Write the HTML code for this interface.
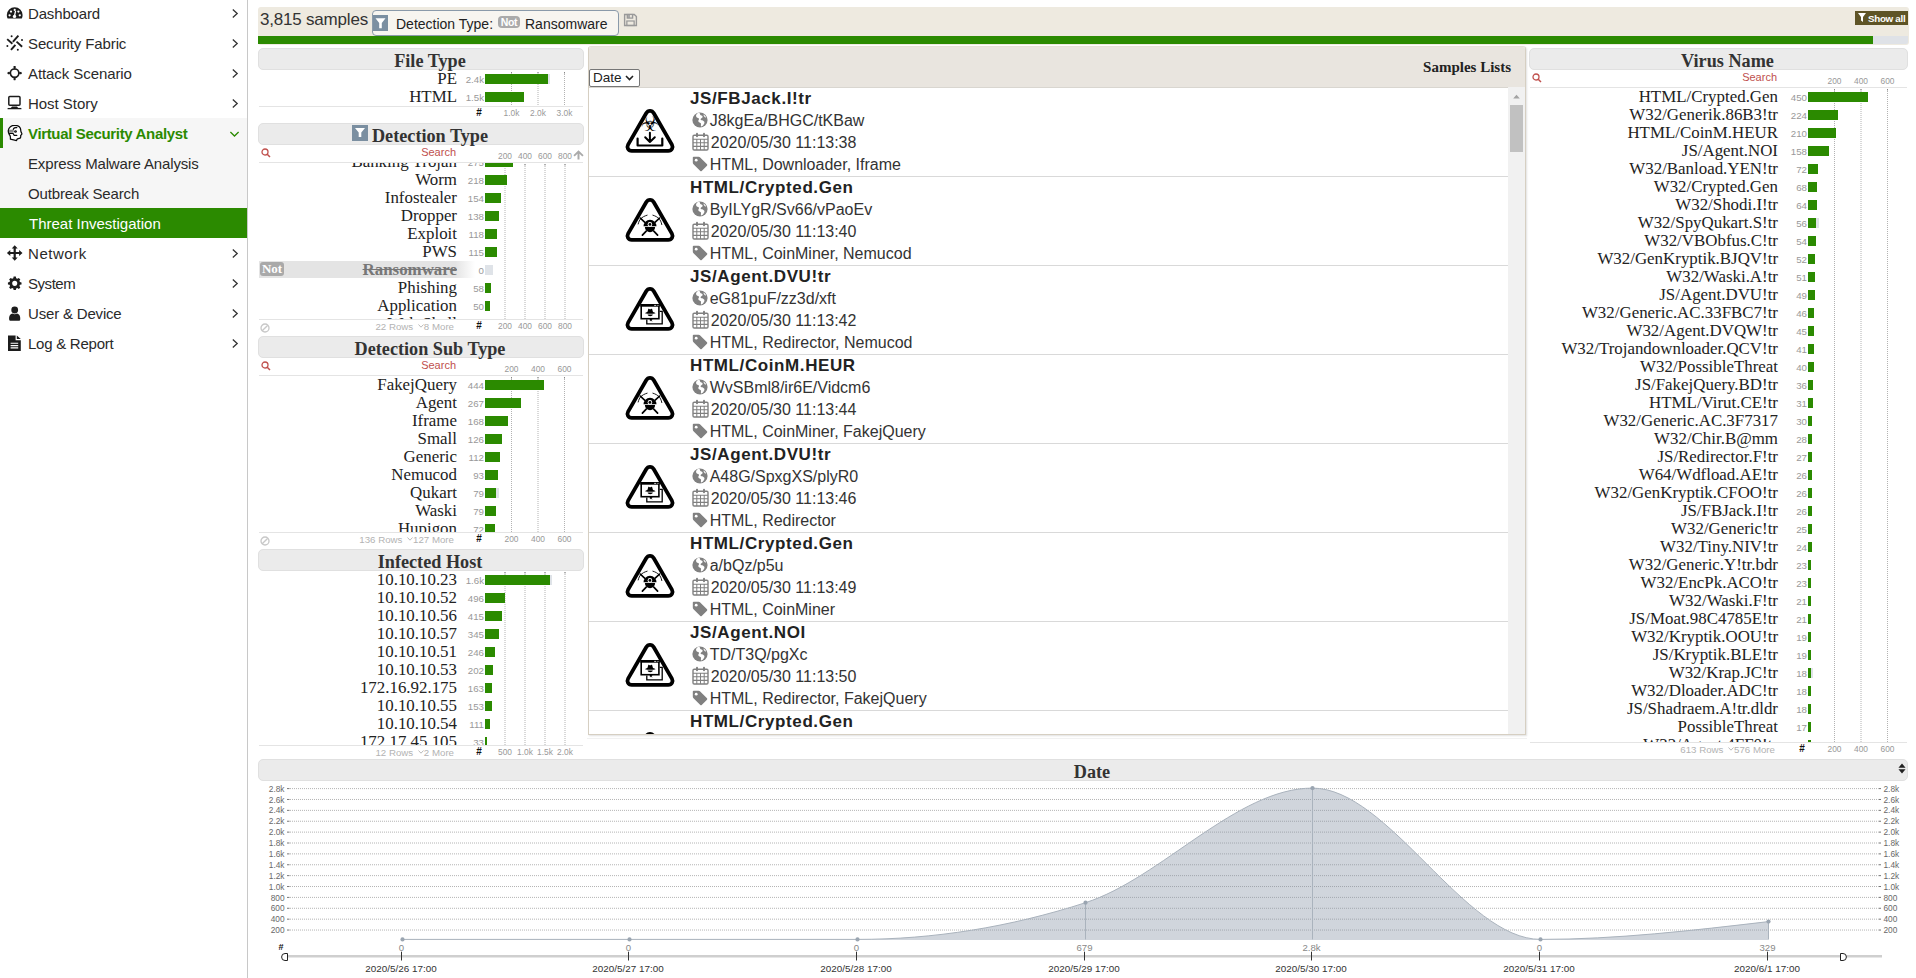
<!DOCTYPE html>
<html lang="en"><head><meta charset="utf-8"><title>Threat Investigation</title><style>
*{box-sizing:border-box}
html,body{margin:0;padding:0}
body{width:1916px;height:978px;overflow:hidden;background:#fff;position:relative;font-family:"Liberation Sans",sans-serif;color:#222}
.abs{position:absolute}
#side{position:absolute;left:0;top:0;width:248px;height:978px;border-right:1px solid #c8c8c8;background:#fff}
.mi{position:absolute;left:0;width:247px;height:30px;font-size:15px;line-height:30px;color:#2a2a2a;white-space:nowrap;letter-spacing:-0.15px}
.mi .t{position:absolute;left:28px;top:0}
.mi svg.ic{position:absolute;left:6px;top:6px;width:17px;height:17px}
.mi svg.ch{position:absolute;left:231px;top:9px;width:8px;height:11px}
.hd{position:absolute;height:22px;background:#ebebeb;border:1px solid #e0e0e0;border-radius:5px;font-family:"Liberation Serif",serif;font-weight:bold;font-size:18.2px;line-height:25px;text-align:center;color:#333;white-space:nowrap;padding-right:2px}
.lb{position:absolute;font-family:"Liberation Serif",serif;font-size:16.9px;line-height:18px;height:18px;text-align:right;white-space:nowrap;color:#222}
.ct{position:absolute;font-size:9.7px;line-height:18px;height:18px;margin-top:0.6px;text-align:right;color:#999;white-space:nowrap}
.bar{position:absolute;height:10px;background:#2b8a00}
.ax{position:absolute;font-size:8.4px;line-height:10px;color:#999;text-align:center;width:40px;white-space:nowrap}
.hl{position:absolute;height:1px;background:#e4e4e4}
.gl{position:absolute;width:0;border-left:1px dotted #bdbdbd}
.clip{position:absolute;overflow:hidden}
.sr{position:absolute;font-size:11px;line-height:12px;color:#c0504d;text-align:right;white-space:nowrap}
.ft{position:absolute;font-size:9.7px;line-height:10px;color:#b3b3b3;margin-top:2px;text-align:right;white-space:nowrap}
.hash{position:absolute;font-size:10px;font-weight:bold;line-height:10px;color:#111;width:10px;text-align:center}
.it{position:absolute;left:0;width:919px;height:89px;border-bottom:1px solid #d9d9d9}
.it .ti{position:absolute;left:101px;top:-0.5px;font-size:17px;font-weight:bold;line-height:22px;color:#222;white-space:nowrap;letter-spacing:0.6px}
.it .ln{position:absolute;left:120.7px;font-size:16px;line-height:22px;color:#333;white-space:nowrap}
.it svg.g{position:absolute;left:102.8px}
.it svg.tri{position:absolute;left:35px;top:19px;width:52px;height:47px;overflow:visible}
</style></head><body>
<div id="side">
<div class="mi" style="top:-1px;letter-spacing:-0.15px"><svg class="ic" viewBox="0 0 17 17"><path d="M8.7 2.2 A7.9 7.9 0 0 0 0.8 10.1 C0.8 11.5 1.1 12.6 1.6 13.6 L15.8 13.6 C16.3 12.6 16.6 11.5 16.6 10.1 A7.9 7.9 0 0 0 8.7 2.2 Z" fill="#1c1c1c"/><circle cx="3.6" cy="10.3" r="1.15" fill="#fff"/><circle cx="5" cy="6.6" r="1.15" fill="#fff"/><circle cx="8.7" cy="4.9" r="1.1" fill="#fff"/><circle cx="12.4" cy="6.6" r="1.15" fill="#fff"/><circle cx="13.8" cy="10.3" r="1.15" fill="#fff"/><path d="M9.6 5.8 L8.5 10.8" stroke="#fff" stroke-width="1.3"/><circle cx="8.5" cy="11.4" r="1.7" fill="#fff"/></svg><span class="t">Dashboard</span><svg class="ch" viewBox="0 0 8 11"><path d="M1.8 1.4 L6.2 5.5 L1.8 9.6" fill="none" stroke="#333" stroke-width="1.3"/></svg></div>
<div class="mi" style="top:29px;letter-spacing:-0.12px"><svg class="ic" viewBox="0 0 17 17"><g stroke="#1c1c1c" stroke-width="1.9" stroke-linecap="butt" fill="none"><path d="M1.2 4.1 L6.4 8.7"/><path d="M12.4 0.6 L6.9 6.8"/><path d="M10.5 6.6 L16.1 11.7"/><path d="M9.4 9.8 L5 14.9"/></g><g fill="#1c1c1c"><circle cx="5.6" cy="1.3" r="1"/><circle cx="1.4" cy="11" r="1"/><circle cx="16" cy="4.9" r="1"/><circle cx="11.8" cy="14.8" r="1"/></g></svg><span class="t">Security Fabric</span><svg class="ch" viewBox="0 0 8 11"><path d="M1.8 1.4 L6.2 5.5 L1.8 9.6" fill="none" stroke="#333" stroke-width="1.3"/></svg></div>
<div class="mi" style="top:59px;letter-spacing:-0.08px"><svg class="ic" viewBox="0 0 17 17"><circle cx="8.6" cy="8.1" r="4.3" fill="none" stroke="#1c1c1c" stroke-width="1.7"/><path d="M7.3 1.6 H9.9 L8.6 5 Z M7.3 14.6 H9.9 L8.6 11.2 Z M2.1 6.8 V9.4 L5.5 8.1 Z M15.1 6.8 V9.4 L11.7 8.1 Z" fill="#1c1c1c"/><path d="M8.6 1 V3 M8.6 13.2 V15.2 M1.5 8.1 H3.5 M13.7 8.1 H15.7" stroke="#1c1c1c" stroke-width="1.6"/></svg><span class="t">Attack Scenario</span><svg class="ch" viewBox="0 0 8 11"><path d="M1.8 1.4 L6.2 5.5 L1.8 9.6" fill="none" stroke="#333" stroke-width="1.3"/></svg></div>
<div class="mi" style="top:89px;letter-spacing:-0.03px"><svg class="ic" viewBox="0 0 17 17"><rect x="2.8" y="1.5" width="11.2" height="8.8" rx="1" fill="none" stroke="#1c1c1c" stroke-width="1.5"/><path d="M6 11.6 H11 L12.4 13.3 H4.6 Z" fill="#1c1c1c"/><path d="M1.6 13.6 H15.4" stroke="#1c1c1c" stroke-width="1.3"/></svg><span class="t">Host Story</span><svg class="ch" viewBox="0 0 8 11"><path d="M1.8 1.4 L6.2 5.5 L1.8 9.6" fill="none" stroke="#333" stroke-width="1.3"/></svg></div>
<div class="abs" style="left:0;top:118px;width:247px;height:90px;background:#f6f6f6"></div>
<div class="abs" style="left:0;top:118px;width:3px;height:30px;background:#2b8a00"></div>
<div class="mi" style="top:119px;color:#2b8a00"><svg class="ic" viewBox="0 0 17 17"><path d="M8.5 0.3 C10.4 0.3 12.2 0.8 13.3 1.8 C14.3 2.8 14.8 4 14.7 5.2 C14.7 6.4 15.2 7.4 15.9 8.7 C15.9 9.4 15.4 9.9 14.7 10.2 C14.8 11.2 14.7 12.2 14.4 12.9 C13.4 13.5 12.2 13.7 11.2 13.9 L10.5 15.6 C8.4 15.3 6.4 14.8 4.4 14.2 C4.5 12.9 4.4 11.7 4.1 10.7 C3.5 10 3.1 9.3 2.9 8.5 C2.4 7.6 2.2 6.6 2.3 5.6 C2.4 4 3.2 2.6 4.4 1.7 C5.6 0.8 7 0.3 8.5 0.3 Z" fill="#fff" stroke="#0a0a0a" stroke-width="1.25" stroke-linejoin="round"/><rect x="3.1" y="4.7" width="4.6" height="2.7" fill="#8a8a8a"/><path d="M10.8 2.7 C9 2.3 7.6 3 7.3 4.4 M3.2 8.4 H6.9 C7.5 8.6 7.5 9.8 8.3 10.4 H10.8" fill="none" stroke="#0a0a0a" stroke-width="1.2" stroke-linecap="round"/><circle cx="9.5" cy="6.5" r="1.35" fill="#0a0a0a"/><circle cx="9.6" cy="6.3" r="0.4" fill="#999"/></svg><span class="t" style="font-weight:bold;letter-spacing:-0.34px">Virtual Security Analyst</span><svg class="ch" viewBox="0 0 11 8" style="width:11px;height:8px;left:229px;top:11px"><path d="M1.4 2 L5.5 6 L9.6 2" fill="none" stroke="#2b8a00" stroke-width="1.3"/></svg></div>
<div class="mi" style="top:149px"><span class="t">Express Malware Analysis</span></div>
<div class="mi" style="top:179px"><span class="t">Outbreak Search</span></div>
<div class="mi" style="top:208px;background:#2b8a00;color:#fff;height:30px"><span class="t" style="top:1px;left:29px;letter-spacing:0">Threat Investigation</span></div>
<div class="mi" style="top:239px;letter-spacing:0.55px"><svg class="ic" viewBox="0 0 17 17"><path d="M8.7 0.2 L11.7 3.6 H9.8 V6.9 H13.1 V5 L16.5 8 L13.1 11 V9.1 H9.8 V12.4 H11.7 L8.7 15.8 L5.7 12.4 H7.6 V9.1 H4.3 V11 L0.9 8 L4.3 5 V6.9 H7.6 V3.6 H5.7 Z" fill="#1c1c1c"/></svg><span class="t">Network</span><svg class="ch" viewBox="0 0 8 11"><path d="M1.8 1.4 L6.2 5.5 L1.8 9.6" fill="none" stroke="#333" stroke-width="1.3"/></svg></div>
<div class="mi" style="top:269px;letter-spacing:-0.45px"><svg class="ic" viewBox="0 0 17 17"><path d="M7.2 1.2 H9.8 L10.2 3.2 L11.6 3.8 L13.3 2.7 L15.1 4.5 L14 6.2 L14.6 7.6 L16.5 8 V10.5 L14.6 10.9 L14 12.3 L15.1 14 L13.3 15.8 L11.6 14.7 L10.2 15.3 L9.8 17 H7.2 L6.8 15.3 L5.4 14.7 L3.7 15.8 L1.9 14 L3 12.3 L2.4 10.9 L0.5 10.5 V8 L2.4 7.6 L3 6.2 L1.9 4.5 L3.7 2.7 L5.4 3.8 L6.8 3.2 Z M8.5 6.1 A3 3 0 1 0 8.5 12.1 A3 3 0 1 0 8.5 6.1 Z" fill="#1c1c1c" fill-rule="evenodd" transform="translate(1.5,0.6) scale(0.85)"/></svg><span class="t">System</span><svg class="ch" viewBox="0 0 8 11"><path d="M1.8 1.4 L6.2 5.5 L1.8 9.6" fill="none" stroke="#333" stroke-width="1.3"/></svg></div>
<div class="mi" style="top:299px;letter-spacing:-0.18px"><svg class="ic" viewBox="0 0 17 17"><circle cx="8.7" cy="5" r="3.4" fill="#1c1c1c"/><path d="M3.2 14.8 C2.6 10.3 4.9 8.6 6.4 8.4 C7.8 9.4 9.6 9.4 11 8.4 C12.5 8.6 14.8 10.3 14.2 14.8 C14.1 15.4 13.7 15.7 13.2 15.7 H4.2 C3.7 15.7 3.3 15.4 3.2 14.8 Z" fill="#1c1c1c"/></svg><span class="t">User &amp; Device</span><svg class="ch" viewBox="0 0 8 11"><path d="M1.8 1.4 L6.2 5.5 L1.8 9.6" fill="none" stroke="#333" stroke-width="1.3"/></svg></div>
<div class="mi" style="top:329px;letter-spacing:-0.25px"><svg class="ic" viewBox="0 0 17 17"><path d="M2 0.4 H9.6 V5.2 H14.8 V16 H2 Z M10.8 0.4 L14.8 4 H10.8 Z" fill="#1c1c1c"/><path d="M4.6 8.3 H12.2 M4.6 10.6 H12.2 M4.6 12.9 H12.2" stroke="#fff" stroke-width="1.1"/></svg><span class="t">Log &amp; Report</span><svg class="ch" viewBox="0 0 8 11"><path d="M1.8 1.4 L6.2 5.5 L1.8 9.6" fill="none" stroke="#333" stroke-width="1.3"/></svg></div>
</div>
<div class="abs" style="left:258px;top:7px;width:1651px;height:38px;background:#eeeae0;border-radius:3px"></div>
<div class="abs" style="left:258px;top:36px;width:1650px;height:8px;background:#dfe2e7;border-radius:0 0 2px 0"></div>
<div class="abs" style="left:258px;top:36px;width:1615px;height:8px;background:#2b8a00"></div>
<div class="abs" style="left:260px;top:10px;font-size:17px;line-height:20px;color:#333;white-space:nowrap;letter-spacing:-0.2px">3,815 samples</div>
<div class="abs" style="left:372px;top:10px;width:247px;height:26px;border:1px solid #8a9aaa;border-radius:4px;background:#f7f5f0"></div>
<svg class="abs" style="left:373px;top:15px;width:15px;height:16px" viewBox="0 0 15 15" preserveAspectRatio="none"><rect width="15" height="15" fill="#7b8fa1"/><path d="M2.5 3 H12.5 L8.8 7.5 V12.5 H6.2 V7.5 Z" fill="#fff"/></svg>
<div class="abs" style="left:396px;top:14.5px;font-size:14px;line-height:18px;color:#222;white-space:nowrap">Detection Type:</div>
<div class="abs" style="left:498px;top:16px;width:22px;height:12px;border-radius:4px;background:#aaa;color:#fff;font-size:10.5px;font-weight:bold;line-height:12px;text-align:center;letter-spacing:-0.3px">Not</div>
<div class="abs" style="left:525px;top:14.5px;font-size:14px;line-height:18px;color:#222;white-space:nowrap">Ransomware</div>
<svg class="abs" style="left:622.5px;top:12.5px;width:15px;height:14px" viewBox="0 0 14 14" preserveAspectRatio="none"><path d="M1.5 1.5 H10.5 L12.5 3.5 V12.5 H1.5 Z" fill="none" stroke="#999" stroke-width="1.3"/><rect x="4" y="1.5" width="5" height="3.6" fill="#aaa" stroke="#999" stroke-width="1.2"/><rect x="6.6" y="2" width="1.6" height="2.4" fill="#eeeae0"/><rect x="3.6" y="8" width="6.8" height="4.5" fill="none" stroke="#999" stroke-width="1.2"/></svg>
<div class="abs" style="left:1855px;top:11px;width:53px;height:14px;background:#5e5426;color:#fff;font-size:9.8px;font-weight:bold;line-height:14px;white-space:nowrap;letter-spacing:-0.3px"><svg style="position:absolute;left:3px;top:1.5px;width:8px;height:9px" viewBox="0 0 8 9"><path d="M0 0 H8 L5 4 V9 L3 7.5 V4 Z" fill="#fff"/></svg><span style="position:absolute;left:13px;top:0.5px">Show all</span></div>
<div class="hd" style="left:258px;top:48px;width:326px"><svg style="display:inline-block;vertical-align:top;margin:1px 4px 0 0;width:16px;height:16px;visibility:hidden" viewBox="0 0 16 16"><rect width="16" height="16" fill="#7b8fa1"/><path d="M3 3 H13 L9.3 7.5 V12 H6.7 V7.5 Z" fill="#fff"/></svg>File Type</div>
<svg class="abs" style="left:258px;top:72px;width:326px;height:34px" viewBox="0 0 326 34"><line x1="253.50" x2="253.50" y1="0" y2="34" stroke="#b2b2b2" stroke-width="1" stroke-dasharray="1 1"/><line x1="253.50" x2="253.50" y1="0" y2="1.5" stroke="#888" stroke-width="1"/><line x1="280.00" x2="280.00" y1="0" y2="34" stroke="#b2b2b2" stroke-width="1" stroke-dasharray="1 1"/><line x1="280.00" x2="280.00" y1="0" y2="1.5" stroke="#888" stroke-width="1"/><line x1="306.50" x2="306.50" y1="0" y2="34" stroke="#b2b2b2" stroke-width="1" stroke-dasharray="1 1"/><line x1="306.50" x2="306.50" y1="0" y2="1.5" stroke="#888" stroke-width="1"/></svg>
<div class="clip" style="left:258px;top:71px;width:326px;height:35px">
<div class="lb" style="left:0;top:-1px;width:199px">PE</div>
<div class="ct" style="left:0;top:-1px;width:226px">2.4k</div>
<div class="bar" style="left:227px;top:3px;width:64.6px;background:#dfe3e8"></div>
<div class="bar" style="left:227px;top:3px;width:63.1px"></div>
<div class="lb" style="left:0;top:17px;width:199px">HTML</div>
<div class="ct" style="left:0;top:17px;width:226px">1.5k</div>
<div class="bar" style="left:227px;top:21px;width:39.1px"></div>
</div>
<div class="hl" style="left:259px;top:106px;width:324px"></div>
<div class="ax" style="left:491.5px;top:108px">1.0k</div>
<div class="ax" style="left:518.0px;top:108px">2.0k</div>
<div class="ax" style="left:544.5px;top:108px">3.0k</div>
<div class="hash" style="left:474px;top:108px">#</div>
<div class="hd" style="left:258px;top:123px;width:326px"><svg style="display:inline-block;vertical-align:top;margin:1px 4px 0 0;width:16px;height:16px;visibility:visible" viewBox="0 0 16 16"><rect width="16" height="16" fill="#7b8fa1"/><path d="M3 3 H13 L9.3 7.5 V12 H6.7 V7.5 Z" fill="#fff"/></svg>Detection Type</div>
<svg class="abs" style="left:261px;top:148px;width:10px;height:10px" viewBox="0 0 10 10"><circle cx="4" cy="4" r="3" fill="none" stroke="#c0504d" stroke-width="1.3"/><path d="M6.2 6.2 L9 9" stroke="#c0504d" stroke-width="1.5"/></svg>
<div class="sr" style="left:396px;top:146px;width:60px">Search</div>
<div class="hl" style="left:259px;top:162px;width:324px"></div>
<div class="ax" style="left:485.0px;top:151px">200</div>
<div class="ax" style="left:505.0px;top:151px">400</div>
<div class="ax" style="left:525.0px;top:151px">600</div>
<div class="ax" style="left:545.0px;top:151px">800</div>
<svg class="abs" style="left:258px;top:164px;width:326px;height:155px" viewBox="0 0 326 155"><line x1="247.00" x2="247.00" y1="0" y2="155" stroke="#b2b2b2" stroke-width="1" stroke-dasharray="1 1"/><line x1="247.00" x2="247.00" y1="0" y2="1.5" stroke="#888" stroke-width="1"/><line x1="267.00" x2="267.00" y1="0" y2="155" stroke="#b2b2b2" stroke-width="1" stroke-dasharray="1 1"/><line x1="267.00" x2="267.00" y1="0" y2="1.5" stroke="#888" stroke-width="1"/><line x1="287.00" x2="287.00" y1="0" y2="155" stroke="#b2b2b2" stroke-width="1" stroke-dasharray="1 1"/><line x1="287.00" x2="287.00" y1="0" y2="1.5" stroke="#888" stroke-width="1"/><line x1="307.00" x2="307.00" y1="0" y2="155" stroke="#b2b2b2" stroke-width="1" stroke-dasharray="1 1"/><line x1="307.00" x2="307.00" y1="0" y2="1.5" stroke="#888" stroke-width="1"/></svg>
<div class="clip" style="left:258px;top:163px;width:326px;height:156px">
<div class="lb" style="left:0;top:-10px;width:199px">Banking Trojan</div>
<div class="ct" style="left:0;top:-10px;width:226px">275</div>
<div class="bar" style="left:227px;top:-6px;width:27.9px"></div>
<div class="lb" style="left:0;top:8px;width:199px">Worm</div>
<div class="ct" style="left:0;top:8px;width:226px">218</div>
<div class="bar" style="left:227px;top:12px;width:22.2px"></div>
<div class="lb" style="left:0;top:26px;width:199px">Infostealer</div>
<div class="ct" style="left:0;top:26px;width:226px">154</div>
<div class="bar" style="left:227px;top:30px;width:15.8px"></div>
<div class="lb" style="left:0;top:44px;width:199px">Dropper</div>
<div class="ct" style="left:0;top:44px;width:226px">138</div>
<div class="bar" style="left:227px;top:48px;width:14.2px"></div>
<div class="lb" style="left:0;top:62px;width:199px">Exploit</div>
<div class="ct" style="left:0;top:62px;width:226px">118</div>
<div class="bar" style="left:227px;top:66px;width:12.2px"></div>
<div class="lb" style="left:0;top:80px;width:199px">PWS</div>
<div class="ct" style="left:0;top:80px;width:226px">115</div>
<div class="bar" style="left:227px;top:84px;width:11.8px"></div>
<div class="abs" style="left:1px;top:98px;width:216px;height:17px;background:linear-gradient(90deg,#e4e4e4 0,#e4e4e4 91%,rgba(228,228,228,0) 100%)"></div>
<div class="abs" style="left:2px;top:99px;width:24px;height:14px;border-radius:3px;background:#a9a9a9;color:#fff;font-family:'Liberation Serif',serif;font-weight:bold;font-size:13px;line-height:14px;text-align:center">Not</div>
<div class="lb" style="left:0;top:98px;width:199px;color:#777;font-weight:bold;text-decoration:line-through">Ransomware</div>
<div class="ct" style="left:0;top:98px;width:226px">0</div>
<div class="bar" style="left:227px;top:102px;width:8px;background:#dfe3e8"></div>
<div class="lb" style="left:0;top:116px;width:199px">Phishing</div>
<div class="ct" style="left:0;top:116px;width:226px">58</div>
<div class="bar" style="left:227px;top:120px;width:6.2px"></div>
<div class="lb" style="left:0;top:134px;width:199px">Application</div>
<div class="ct" style="left:0;top:134px;width:226px">50</div>
<div class="bar" style="left:227px;top:138px;width:5.3px"></div>
<div class="lb" style="left:0;top:152px;width:199px">Web Shell</div>
<div class="ct" style="left:0;top:152px;width:226px">42</div>
<div class="bar" style="left:227px;top:156px;width:4.5px"></div>
</div>
<div class="hl" style="left:259px;top:319px;width:324px"></div>
<div class="ax" style="left:485.0px;top:321px">200</div>
<div class="ax" style="left:505.0px;top:321px">400</div>
<div class="ax" style="left:525.0px;top:321px">600</div>
<div class="ax" style="left:545.0px;top:321px">800</div>
<div class="hash" style="left:474px;top:321px">#</div>
<div class="ft" style="left:254px;top:320px;width:200px">22 Rows <svg style="display:inline-block;width:6px;height:4px;margin:0 0 2px 2px;vertical-align:baseline" viewBox="0 0 6 4"><path d="M0.5 0.5 L3 3.2 L5.5 0.5" fill="none" stroke="#b3b3b3" stroke-width="0.9"/></svg>8 More</div>
<svg class="abs" style="left:572.5px;top:149.500px;width:11px;height:10px" viewBox="0 0 11 10"><path d="M5.5 0.3 L10.6 5.2 L9.3 6.4 L6.5 3.8 V9.5 H4.500 V3.8 L1.7 6.4 L0.4 5.2 Z" fill="#aaa"/></svg>
<svg class="abs" style="left:260px;top:323px;width:10px;height:10px" viewBox="0 0 9 9"><circle cx="4.5" cy="4.5" r="3.6" fill="none" stroke="#c8c8c8" stroke-width="1.2"/><path d="M2 7 L7 2" stroke="#c8c8c8" stroke-width="1.2"/></svg>
<div class="hd" style="left:258px;top:336px;width:326px"><svg style="display:inline-block;vertical-align:top;margin:1px 4px 0 0;width:16px;height:16px;visibility:hidden" viewBox="0 0 16 16"><rect width="16" height="16" fill="#7b8fa1"/><path d="M3 3 H13 L9.3 7.5 V12 H6.7 V7.5 Z" fill="#fff"/></svg>Detection Sub Type</div>
<svg class="abs" style="left:261px;top:361px;width:10px;height:10px" viewBox="0 0 10 10"><circle cx="4" cy="4" r="3" fill="none" stroke="#c0504d" stroke-width="1.3"/><path d="M6.2 6.2 L9 9" stroke="#c0504d" stroke-width="1.5"/></svg>
<div class="sr" style="left:396px;top:359px;width:60px">Search</div>
<div class="hl" style="left:259px;top:375px;width:324px"></div>
<div class="ax" style="left:491.5px;top:364px">200</div>
<div class="ax" style="left:518.0px;top:364px">400</div>
<div class="ax" style="left:544.5px;top:364px">600</div>
<svg class="abs" style="left:258px;top:377px;width:326px;height:155px" viewBox="0 0 326 155"><line x1="253.50" x2="253.50" y1="0" y2="155" stroke="#b2b2b2" stroke-width="1" stroke-dasharray="1 1"/><line x1="253.50" x2="253.50" y1="0" y2="1.5" stroke="#888" stroke-width="1"/><line x1="280.00" x2="280.00" y1="0" y2="155" stroke="#b2b2b2" stroke-width="1" stroke-dasharray="1 1"/><line x1="280.00" x2="280.00" y1="0" y2="1.5" stroke="#888" stroke-width="1"/><line x1="306.50" x2="306.50" y1="0" y2="155" stroke="#b2b2b2" stroke-width="1" stroke-dasharray="1 1"/><line x1="306.50" x2="306.50" y1="0" y2="1.5" stroke="#888" stroke-width="1"/></svg>
<div class="clip" style="left:258px;top:376px;width:326px;height:156px">
<div class="lb" style="left:0;top:0px;width:199px">FakejQuery</div>
<div class="ct" style="left:0;top:0px;width:226px">444</div>
<div class="bar" style="left:227px;top:4px;width:59.2px"></div>
<div class="lb" style="left:0;top:18px;width:199px">Agent</div>
<div class="ct" style="left:0;top:18px;width:226px">267</div>
<div class="bar" style="left:227px;top:22px;width:35.7px"></div>
<div class="lb" style="left:0;top:36px;width:199px">Iframe</div>
<div class="ct" style="left:0;top:36px;width:226px">168</div>
<div class="bar" style="left:227px;top:40px;width:22.6px"></div>
<div class="lb" style="left:0;top:54px;width:199px">Small</div>
<div class="ct" style="left:0;top:54px;width:226px">126</div>
<div class="bar" style="left:227px;top:58px;width:17.0px"></div>
<div class="lb" style="left:0;top:72px;width:199px">Generic</div>
<div class="ct" style="left:0;top:72px;width:226px">112</div>
<div class="bar" style="left:227px;top:76px;width:15.2px"></div>
<div class="lb" style="left:0;top:90px;width:199px">Nemucod</div>
<div class="ct" style="left:0;top:90px;width:226px">93</div>
<div class="bar" style="left:227px;top:94px;width:12.7px"></div>
<div class="lb" style="left:0;top:108px;width:199px">Qukart</div>
<div class="ct" style="left:0;top:108px;width:226px">79</div>
<div class="bar" style="left:227px;top:112px;width:13.8px;background:#dfe3e8"></div>
<div class="bar" style="left:227px;top:112px;width:10.8px"></div>
<div class="lb" style="left:0;top:126px;width:199px">Waski</div>
<div class="ct" style="left:0;top:126px;width:226px">79</div>
<div class="bar" style="left:227px;top:130px;width:10.8px"></div>
<div class="lb" style="left:0;top:144px;width:199px">Hupigon</div>
<div class="ct" style="left:0;top:144px;width:226px">72</div>
<div class="bar" style="left:227px;top:148px;width:9.9px"></div>
</div>
<div class="hl" style="left:259px;top:532px;width:324px"></div>
<div class="ax" style="left:491.5px;top:534px">200</div>
<div class="ax" style="left:518.0px;top:534px">400</div>
<div class="ax" style="left:544.5px;top:534px">600</div>
<div class="hash" style="left:474px;top:534px">#</div>
<div class="ft" style="left:254px;top:533px;width:200px">136 Rows <svg style="display:inline-block;width:6px;height:4px;margin:0 0 2px 2px;vertical-align:baseline" viewBox="0 0 6 4"><path d="M0.5 0.5 L3 3.2 L5.5 0.5" fill="none" stroke="#b3b3b3" stroke-width="0.9"/></svg>127 More</div>
<svg class="abs" style="left:260px;top:536px;width:10px;height:10px" viewBox="0 0 9 9"><circle cx="4.5" cy="4.5" r="3.6" fill="none" stroke="#c8c8c8" stroke-width="1.2"/><path d="M2 7 L7 2" stroke="#c8c8c8" stroke-width="1.2"/></svg>
<div class="hd" style="left:258px;top:549px;width:326px"><svg style="display:inline-block;vertical-align:top;margin:1px 4px 0 0;width:16px;height:16px;visibility:hidden" viewBox="0 0 16 16"><rect width="16" height="16" fill="#7b8fa1"/><path d="M3 3 H13 L9.3 7.5 V12 H6.7 V7.5 Z" fill="#fff"/></svg>Infected Host</div>
<svg class="abs" style="left:258px;top:572px;width:326px;height:173px" viewBox="0 0 326 173"><line x1="247.00" x2="247.00" y1="0" y2="173" stroke="#b2b2b2" stroke-width="1" stroke-dasharray="1 1"/><line x1="247.00" x2="247.00" y1="0" y2="1.5" stroke="#888" stroke-width="1"/><line x1="267.00" x2="267.00" y1="0" y2="173" stroke="#b2b2b2" stroke-width="1" stroke-dasharray="1 1"/><line x1="267.00" x2="267.00" y1="0" y2="1.5" stroke="#888" stroke-width="1"/><line x1="287.00" x2="287.00" y1="0" y2="173" stroke="#b2b2b2" stroke-width="1" stroke-dasharray="1 1"/><line x1="287.00" x2="287.00" y1="0" y2="1.5" stroke="#888" stroke-width="1"/><line x1="307.00" x2="307.00" y1="0" y2="173" stroke="#b2b2b2" stroke-width="1" stroke-dasharray="1 1"/><line x1="307.00" x2="307.00" y1="0" y2="1.5" stroke="#888" stroke-width="1"/></svg>
<div class="clip" style="left:258px;top:571px;width:326px;height:174px">
<div class="lb" style="left:0;top:0px;width:199px">10.10.10.23</div>
<div class="ct" style="left:0;top:0px;width:226px">1.6k</div>
<div class="bar" style="left:227px;top:4px;width:66.6px;background:#dfe3e8"></div>
<div class="bar" style="left:227px;top:4px;width:65.1px"></div>
<div class="lb" style="left:0;top:18px;width:199px">10.10.10.52</div>
<div class="ct" style="left:0;top:18px;width:226px">496</div>
<div class="bar" style="left:227px;top:22px;width:20.2px"></div>
<div class="lb" style="left:0;top:36px;width:199px">10.10.10.56</div>
<div class="ct" style="left:0;top:36px;width:226px">415</div>
<div class="bar" style="left:227px;top:40px;width:17.0px"></div>
<div class="lb" style="left:0;top:54px;width:199px">10.10.10.57</div>
<div class="ct" style="left:0;top:54px;width:226px">345</div>
<div class="bar" style="left:227px;top:58px;width:14.2px"></div>
<div class="lb" style="left:0;top:72px;width:199px">10.10.10.51</div>
<div class="ct" style="left:0;top:72px;width:226px">246</div>
<div class="bar" style="left:227px;top:76px;width:10.2px"></div>
<div class="lb" style="left:0;top:90px;width:199px">10.10.10.53</div>
<div class="ct" style="left:0;top:90px;width:226px">202</div>
<div class="bar" style="left:227px;top:94px;width:8.4px"></div>
<div class="lb" style="left:0;top:108px;width:199px">172.16.92.175</div>
<div class="ct" style="left:0;top:108px;width:226px">163</div>
<div class="bar" style="left:227px;top:112px;width:6.9px"></div>
<div class="lb" style="left:0;top:126px;width:199px">10.10.10.55</div>
<div class="ct" style="left:0;top:126px;width:226px">153</div>
<div class="bar" style="left:227px;top:130px;width:6.5px"></div>
<div class="lb" style="left:0;top:144px;width:199px">10.10.10.54</div>
<div class="ct" style="left:0;top:144px;width:226px">111</div>
<div class="bar" style="left:227px;top:148px;width:4.8px"></div>
<div class="lb" style="left:0;top:162px;width:199px">172.17.45.105</div>
<div class="ct" style="left:0;top:162px;width:226px">33</div>
<div class="bar" style="left:227px;top:166px;width:1.7px"></div>
</div>
<div class="hl" style="left:259px;top:745px;width:324px"></div>
<div class="ax" style="left:485.0px;top:747px">500</div>
<div class="ax" style="left:505.0px;top:747px">1.0k</div>
<div class="ax" style="left:525.0px;top:747px">1.5k</div>
<div class="ax" style="left:545.0px;top:747px">2.0k</div>
<div class="hash" style="left:474px;top:747px">#</div>
<div class="ft" style="left:254px;top:746px;width:200px">12 Rows <svg style="display:inline-block;width:6px;height:4px;margin:0 0 2px 2px;vertical-align:baseline" viewBox="0 0 6 4"><path d="M0.5 0.5 L3 3.2 L5.5 0.5" fill="none" stroke="#b3b3b3" stroke-width="0.9"/></svg>2 More</div>
<div class="hd" style="left:1529px;top:48px;width:379px"><svg style="display:inline-block;vertical-align:top;margin:1px 4px 0 0;width:16px;height:16px;visibility:hidden" viewBox="0 0 16 16"><rect width="16" height="16" fill="#7b8fa1"/><path d="M3 3 H13 L9.3 7.5 V12 H6.7 V7.5 Z" fill="#fff"/></svg>Virus Name</div>
<svg class="abs" style="left:1532px;top:73px;width:10px;height:10px" viewBox="0 0 10 10"><circle cx="4" cy="4" r="3" fill="none" stroke="#c0504d" stroke-width="1.3"/><path d="M6.2 6.2 L9 9" stroke="#c0504d" stroke-width="1.5"/></svg>
<div class="sr" style="left:1717px;top:71px;width:60px">Search</div>
<div class="hl" style="left:1530px;top:87px;width:377px"></div>
<div class="ax" style="left:1814.5px;top:76px">200</div>
<div class="ax" style="left:1841.0px;top:76px">400</div>
<div class="ax" style="left:1867.5px;top:76px">600</div>
<svg class="abs" style="left:1529px;top:89px;width:379px;height:653px" viewBox="0 0 379 653"><line x1="305.50" x2="305.50" y1="0" y2="653" stroke="#b2b2b2" stroke-width="1" stroke-dasharray="1 1"/><line x1="305.50" x2="305.50" y1="0" y2="1.5" stroke="#888" stroke-width="1"/><line x1="332.00" x2="332.00" y1="0" y2="653" stroke="#b2b2b2" stroke-width="1" stroke-dasharray="1 1"/><line x1="332.00" x2="332.00" y1="0" y2="1.5" stroke="#888" stroke-width="1"/><line x1="358.50" x2="358.50" y1="0" y2="653" stroke="#b2b2b2" stroke-width="1" stroke-dasharray="1 1"/><line x1="358.50" x2="358.50" y1="0" y2="1.5" stroke="#888" stroke-width="1"/></svg>
<div class="clip" style="left:1529px;top:88px;width:379px;height:654px">
<div class="lb" style="left:0;top:0px;width:249px">HTML/Crypted.Gen</div>
<div class="ct" style="left:0;top:0px;width:278px">450</div>
<div class="bar" style="left:279px;top:4px;width:60.0px"></div>
<div class="lb" style="left:0;top:18px;width:249px">W32/Generik.86B3!tr</div>
<div class="ct" style="left:0;top:18px;width:278px">224</div>
<div class="bar" style="left:279px;top:22px;width:30.0px"></div>
<div class="lb" style="left:0;top:36px;width:249px">HTML/CoinM.HEUR</div>
<div class="ct" style="left:0;top:36px;width:278px">210</div>
<div class="bar" style="left:279px;top:40px;width:28.2px"></div>
<div class="lb" style="left:0;top:54px;width:249px">JS/Agent.NOI</div>
<div class="ct" style="left:0;top:54px;width:278px">158</div>
<div class="bar" style="left:279px;top:58px;width:21.3px"></div>
<div class="lb" style="left:0;top:72px;width:249px">W32/Banload.YEN!tr</div>
<div class="ct" style="left:0;top:72px;width:278px">72</div>
<div class="bar" style="left:279px;top:76px;width:9.9px"></div>
<div class="lb" style="left:0;top:90px;width:249px">W32/Crypted.Gen</div>
<div class="ct" style="left:0;top:90px;width:278px">68</div>
<div class="bar" style="left:279px;top:94px;width:9.4px"></div>
<div class="lb" style="left:0;top:108px;width:249px">W32/Shodi.I!tr</div>
<div class="ct" style="left:0;top:108px;width:278px">64</div>
<div class="bar" style="left:279px;top:112px;width:8.8px"></div>
<div class="lb" style="left:0;top:126px;width:249px">W32/SpyQukart.S!tr</div>
<div class="ct" style="left:0;top:126px;width:278px">56</div>
<div class="bar" style="left:279px;top:130px;width:10.8px;background:#dfe3e8"></div>
<div class="bar" style="left:279px;top:130px;width:7.8px"></div>
<div class="lb" style="left:0;top:144px;width:249px">W32/VBObfus.C!tr</div>
<div class="ct" style="left:0;top:144px;width:278px">54</div>
<div class="bar" style="left:279px;top:148px;width:7.5px"></div>
<div class="lb" style="left:0;top:162px;width:249px">W32/GenKryptik.BJQV!tr</div>
<div class="ct" style="left:0;top:162px;width:278px">52</div>
<div class="bar" style="left:279px;top:166px;width:7.2px"></div>
<div class="lb" style="left:0;top:180px;width:249px">W32/Waski.A!tr</div>
<div class="ct" style="left:0;top:180px;width:278px">51</div>
<div class="bar" style="left:279px;top:184px;width:7.1px"></div>
<div class="lb" style="left:0;top:198px;width:249px">JS/Agent.DVU!tr</div>
<div class="ct" style="left:0;top:198px;width:278px">49</div>
<div class="bar" style="left:279px;top:202px;width:6.8px"></div>
<div class="lb" style="left:0;top:216px;width:249px">W32/Generic.AC.33FBC7!tr</div>
<div class="ct" style="left:0;top:216px;width:278px">46</div>
<div class="bar" style="left:279px;top:220px;width:6.4px"></div>
<div class="lb" style="left:0;top:234px;width:249px">W32/Agent.DVQW!tr</div>
<div class="ct" style="left:0;top:234px;width:278px">45</div>
<div class="bar" style="left:279px;top:238px;width:6.3px"></div>
<div class="lb" style="left:0;top:252px;width:249px">W32/Trojandownloader.QCV!tr</div>
<div class="ct" style="left:0;top:252px;width:278px">41</div>
<div class="bar" style="left:279px;top:256px;width:5.8px"></div>
<div class="lb" style="left:0;top:270px;width:249px">W32/PossibleThreat</div>
<div class="ct" style="left:0;top:270px;width:278px">40</div>
<div class="bar" style="left:279px;top:274px;width:5.7px"></div>
<div class="lb" style="left:0;top:288px;width:249px">JS/FakejQuery.BD!tr</div>
<div class="ct" style="left:0;top:288px;width:278px">36</div>
<div class="bar" style="left:279px;top:292px;width:5.1px"></div>
<div class="lb" style="left:0;top:306px;width:249px">HTML/Virut.CE!tr</div>
<div class="ct" style="left:0;top:306px;width:278px">31</div>
<div class="bar" style="left:279px;top:310px;width:4.5px"></div>
<div class="lb" style="left:0;top:324px;width:249px">W32/Generic.AC.3F7317</div>
<div class="ct" style="left:0;top:324px;width:278px">30</div>
<div class="bar" style="left:279px;top:328px;width:4.3px"></div>
<div class="lb" style="left:0;top:342px;width:249px">W32/Chir.B@mm</div>
<div class="ct" style="left:0;top:342px;width:278px">28</div>
<div class="bar" style="left:279px;top:346px;width:4.1px"></div>
<div class="lb" style="left:0;top:360px;width:249px">JS/Redirector.F!tr</div>
<div class="ct" style="left:0;top:360px;width:278px">27</div>
<div class="bar" style="left:279px;top:364px;width:3.9px"></div>
<div class="lb" style="left:0;top:378px;width:249px">W64/Wdfload.AE!tr</div>
<div class="ct" style="left:0;top:378px;width:278px">26</div>
<div class="bar" style="left:279px;top:382px;width:3.8px"></div>
<div class="lb" style="left:0;top:396px;width:249px">W32/GenKryptik.CFOO!tr</div>
<div class="ct" style="left:0;top:396px;width:278px">26</div>
<div class="bar" style="left:279px;top:400px;width:3.8px"></div>
<div class="lb" style="left:0;top:414px;width:249px">JS/FBJack.I!tr</div>
<div class="ct" style="left:0;top:414px;width:278px">26</div>
<div class="bar" style="left:279px;top:418px;width:3.8px"></div>
<div class="lb" style="left:0;top:432px;width:249px">W32/Generic!tr</div>
<div class="ct" style="left:0;top:432px;width:278px">25</div>
<div class="bar" style="left:279px;top:436px;width:3.7px"></div>
<div class="lb" style="left:0;top:450px;width:249px">W32/Tiny.NIV!tr</div>
<div class="ct" style="left:0;top:450px;width:278px">24</div>
<div class="bar" style="left:279px;top:454px;width:3.5px"></div>
<div class="lb" style="left:0;top:468px;width:249px">W32/Generic.Y!tr.bdr</div>
<div class="ct" style="left:0;top:468px;width:278px">23</div>
<div class="bar" style="left:279px;top:472px;width:3.4px"></div>
<div class="lb" style="left:0;top:486px;width:249px">W32/EncPk.ACO!tr</div>
<div class="ct" style="left:0;top:486px;width:278px">23</div>
<div class="bar" style="left:279px;top:490px;width:3.4px"></div>
<div class="lb" style="left:0;top:504px;width:249px">W32/Waski.F!tr</div>
<div class="ct" style="left:0;top:504px;width:278px">21</div>
<div class="bar" style="left:279px;top:508px;width:3.1px"></div>
<div class="lb" style="left:0;top:522px;width:249px">JS/Moat.98C4785E!tr</div>
<div class="ct" style="left:0;top:522px;width:278px">21</div>
<div class="bar" style="left:279px;top:526px;width:3.1px"></div>
<div class="lb" style="left:0;top:540px;width:249px">W32/Kryptik.OOU!tr</div>
<div class="ct" style="left:0;top:540px;width:278px">19</div>
<div class="bar" style="left:279px;top:544px;width:2.9px"></div>
<div class="lb" style="left:0;top:558px;width:249px">JS/Kryptik.BLE!tr</div>
<div class="ct" style="left:0;top:558px;width:278px">19</div>
<div class="bar" style="left:279px;top:562px;width:2.9px"></div>
<div class="lb" style="left:0;top:576px;width:249px">W32/Krap.JC!tr</div>
<div class="ct" style="left:0;top:576px;width:278px">18</div>
<div class="bar" style="left:279px;top:580px;width:4.7px;background:#dfe3e8"></div>
<div class="bar" style="left:279px;top:580px;width:2.7px"></div>
<div class="lb" style="left:0;top:594px;width:249px">W32/Dloader.ADC!tr</div>
<div class="ct" style="left:0;top:594px;width:278px">18</div>
<div class="bar" style="left:279px;top:598px;width:2.7px"></div>
<div class="lb" style="left:0;top:612px;width:249px">JS/Shadraem.A!tr.dldr</div>
<div class="ct" style="left:0;top:612px;width:278px">18</div>
<div class="bar" style="left:279px;top:616px;width:2.7px"></div>
<div class="lb" style="left:0;top:630px;width:249px">PossibleThreat</div>
<div class="ct" style="left:0;top:630px;width:278px">17</div>
<div class="bar" style="left:279px;top:634px;width:2.6px"></div>
<div class="lb" style="left:0;top:648px;width:249px">W32/Agent.4FF0!tr</div>
<div class="ct" style="left:0;top:648px;width:278px">17</div>
<div class="bar" style="left:279px;top:652px;width:2.6px"></div>
</div>
<div class="hl" style="left:1530px;top:742px;width:377px"></div>
<div class="ax" style="left:1814.5px;top:744px">200</div>
<div class="ax" style="left:1841.0px;top:744px">400</div>
<div class="ax" style="left:1867.5px;top:744px">600</div>
<div class="hash" style="left:1797px;top:744px">#</div>
<div class="ft" style="left:1575px;top:743px;width:200px">613 Rows <svg style="display:inline-block;width:6px;height:4px;margin:0 0 2px 2px;vertical-align:baseline" viewBox="0 0 6 4"><path d="M0.5 0.5 L3 3.2 L5.5 0.5" fill="none" stroke="#b3b3b3" stroke-width="0.9"/></svg>576 More</div>
<div class="abs" style="left:588px;top:46px;width:938px;height:689px;border:1px solid #d6cfc2;border-top-color:#e6e0d6;border-radius:3px 3px 0 0;background:#fff;box-shadow:1px 1px 2px rgba(0,0,0,.12)"></div>
<div class="abs" style="left:589px;top:47px;width:936px;height:41px;background:#e9e5df;border-radius:2px 2px 0 0;border-bottom:1px solid #d9d6d0"></div>
<div class="abs" style="left:1311px;top:58px;width:200px;text-align:right;font-family:'Liberation Serif',serif;font-weight:bold;font-size:15px;line-height:18px;color:#222">Samples Lists</div>
<div class="abs" style="left:589px;top:69px;width:51px;height:18px;border:1px solid #767676;border-radius:2px;background:#fff;font-size:13.5px;line-height:16px;color:#222"><span style="position:absolute;left:3px;top:0">Date</span><svg style="position:absolute;left:35px;top:5px;width:9px;height:6px" viewBox="0 0 9 6"><path d="M1 1 L4.5 4.5 L8 1" fill="none" stroke="#222" stroke-width="1.6"/></svg></div>
<div class="clip" style="left:589px;top:88px;width:919px;height:646px">
<div class="it" style="top:0px">
<svg class="tri" viewBox="0 0 52 47"><path d="M26 3.9 C27.7 3.9 29 4.9 29.8 6.3 L47.9 37.6 C49.5 40.6 47.8 43.9 44.3 43.9 L7.7 43.9 C4.2 43.9 2.5 40.6 4.1 37.6 L22.2 6.3 C23 4.9 24.3 3.9 26 3.9 Z" fill="none" stroke="#000" stroke-width="3.8" stroke-linejoin="round"/><text x="26" y="24.2" font-family="DejaVu Sans, sans-serif" font-size="20.5" text-anchor="middle" fill="#000">&#9763;</text><g stroke="#000" fill="none" stroke-linecap="round" stroke-linejoin="round"><path d="M25.9 25.8 V35 M21.2 30.2 L25.9 35 L30.8 30.2" stroke-width="2"/><path d="M13.6 31.5 V38.5 H38.3 V31.5" stroke-width="2.2"/></g></svg>
<div class="ti">JS/FBJack.I!tr</div>
<svg class="g" style="top:24px;width:16px;height:16px" viewBox="0 0 16 16"><circle cx="8" cy="8" r="7.6" fill="#808080"/><path d="M5.5 1.2 C4 2.5 3.6 4 4.6 5.2 C5.6 6 6.6 5.8 7 6.8 C7.2 7.8 6 8.2 6.4 9.4 C7 10.6 8.4 10.4 9 11.6 C9.2 12.6 8.6 13.6 9.2 14.6 C11 13.8 12 12.4 12.4 11 C12.8 9.8 11.6 9.2 10.8 8.6 C10 8 9 8.2 8.6 7.4 C8.4 6.4 9.6 6.2 10.4 5.4 C11 4.6 10.4 3.6 9.4 3.4 C8.4 3.2 7.8 2.4 8 1.4 C7 0.9 6.2 0.9 5.5 1.2 Z" fill="#fff"/><path d="M11.5 2.4 C12.6 3 13.6 4.2 14.2 5.4 C13.4 5.6 12.6 5.2 12.2 4.4 C11.8 3.6 11.4 3 11.5 2.4 Z" fill="#fff"/></svg>
<div class="ln" style="top:21.8px">J8kgEa/BHGC/tKBaw</div>
<svg class="g" style="top:44px;width:17px;height:19px" preserveAspectRatio="none" viewBox="0 0 17 18"><rect x="1" y="3" width="15" height="14" rx="1.2" fill="#fff" stroke="#808080" stroke-width="1.4"/><path d="M1 6.8 H16 M1 10.2 H16 M1 13.6 H16 M4.8 6.8 V17 M8.5 6.8 V17 M12.2 6.8 V17" stroke="#808080" stroke-width="1"/><rect x="4" y="0.6" width="2" height="4.4" rx="1" fill="#808080"/><rect x="11" y="0.6" width="2" height="4.4" rx="1" fill="#808080"/></svg>
<div class="ln" style="top:43.7px;left:121.8px">2020/05/30 11:13:38</div>
<svg class="g" style="top:68px;width:16px;height:16px" viewBox="0 0 16 16"><path d="M0.8 1.6 C0.8 1.1 1.1 0.8 1.6 0.8 H6.6 C7.2 0.8 7.8 1.1 8.2 1.5 L15 8.3 C15.4 8.7 15.4 9.3 15 9.7 L9.7 15 C9.3 15.4 8.7 15.4 8.3 15 L1.5 8.2 C1.1 7.8 0.8 7.2 0.8 6.6 Z" fill="#808080"/><circle cx="4.2" cy="4.2" r="1.4" fill="#fff"/></svg>
<div class="ln" style="top:65.8px">HTML, Downloader, Iframe</div>
</div>
<div class="it" style="top:89px">
<svg class="tri" viewBox="0 0 52 47"><path d="M26 3.9 C27.7 3.9 29 4.9 29.8 6.3 L47.9 37.6 C49.5 40.6 47.8 43.9 44.3 43.9 L7.7 43.9 C4.2 43.9 2.5 40.6 4.1 37.6 L22.2 6.3 C23 4.9 24.3 3.9 26 3.9 Z" fill="none" stroke="#000" stroke-width="3.8" stroke-linejoin="round"/><path d="M19.5 30.3 A6.5 6.5 0 0 1 32.5 30.3 Z" fill="#000"/><circle cx="25.9" cy="28.4" r="2.3" fill="#fff"/><circle cx="25.9" cy="28.4" r="1.4" fill="#000"/><path d="M20.9 31.1 H31.1 A5.1 5.1 0 0 1 20.9 31.1 Z" fill="#000"/><g stroke="#000" fill="none" stroke-linecap="round"><path d="M22.2 35.2 L18.4 39.2 M29.8 35.2 L33.6 39.2" stroke-width="1.7"/><path d="M20.6 26.1 L16.3 22.1 M31.2 26.1 L35.5 22.1" stroke-width="1.6"/><path d="M14.2 28 C14.8 25.5 15.6 24 16.7 22.8 C18.3 21.2 20.3 20 23.1 19.2 M37.8 28.6 C37.2 25.8 36.3 24 35.1 22.8 C33.6 21.2 31.6 20 28.9 19.2" stroke-width="0.9"/></g></svg>
<div class="ti">HTML/Crypted.Gen</div>
<svg class="g" style="top:24px;width:16px;height:16px" viewBox="0 0 16 16"><circle cx="8" cy="8" r="7.6" fill="#808080"/><path d="M5.5 1.2 C4 2.5 3.6 4 4.6 5.2 C5.6 6 6.6 5.8 7 6.8 C7.2 7.8 6 8.2 6.4 9.4 C7 10.6 8.4 10.4 9 11.6 C9.2 12.6 8.6 13.6 9.2 14.6 C11 13.8 12 12.4 12.4 11 C12.8 9.8 11.6 9.2 10.8 8.6 C10 8 9 8.2 8.6 7.4 C8.4 6.4 9.6 6.2 10.4 5.4 C11 4.6 10.4 3.6 9.4 3.4 C8.4 3.2 7.8 2.4 8 1.4 C7 0.9 6.2 0.9 5.5 1.2 Z" fill="#fff"/><path d="M11.5 2.4 C12.6 3 13.6 4.2 14.2 5.4 C13.4 5.6 12.6 5.2 12.2 4.4 C11.8 3.6 11.4 3 11.5 2.4 Z" fill="#fff"/></svg>
<div class="ln" style="top:21.8px">ByILYgR/Sv66/vPaoEv</div>
<svg class="g" style="top:44px;width:17px;height:19px" preserveAspectRatio="none" viewBox="0 0 17 18"><rect x="1" y="3" width="15" height="14" rx="1.2" fill="#fff" stroke="#808080" stroke-width="1.4"/><path d="M1 6.8 H16 M1 10.2 H16 M1 13.6 H16 M4.8 6.8 V17 M8.5 6.8 V17 M12.2 6.8 V17" stroke="#808080" stroke-width="1"/><rect x="4" y="0.6" width="2" height="4.4" rx="1" fill="#808080"/><rect x="11" y="0.6" width="2" height="4.4" rx="1" fill="#808080"/></svg>
<div class="ln" style="top:43.7px;left:121.8px">2020/05/30 11:13:40</div>
<svg class="g" style="top:68px;width:16px;height:16px" viewBox="0 0 16 16"><path d="M0.8 1.6 C0.8 1.1 1.1 0.8 1.6 0.8 H6.6 C7.2 0.8 7.8 1.1 8.2 1.5 L15 8.3 C15.4 8.7 15.4 9.3 15 9.7 L9.7 15 C9.3 15.4 8.7 15.4 8.3 15 L1.5 8.2 C1.1 7.8 0.8 7.2 0.8 6.6 Z" fill="#808080"/><circle cx="4.2" cy="4.2" r="1.4" fill="#fff"/></svg>
<div class="ln" style="top:65.8px">HTML, CoinMiner, Nemucod</div>
</div>
<div class="it" style="top:178px">
<svg class="tri" viewBox="0 0 52 47"><path d="M26 3.9 C27.7 3.9 29 4.9 29.8 6.3 L47.9 37.6 C49.5 40.6 47.8 43.9 44.3 43.9 L7.7 43.9 C4.2 43.9 2.5 40.6 4.1 37.6 L22.2 6.3 C23 4.9 24.3 3.9 26 3.9 Z" fill="none" stroke="#000" stroke-width="3.8" stroke-linejoin="round"/><g stroke="#000" fill="none"><path d="M35.7 26.3 H38.2 V38.8 H22.8 V34.5" stroke-width="1.3"/><rect x="17.2" y="19.8" width="17.7" height="13.9" stroke-width="1.6" fill="#fff"/></g><rect x="16.4" y="19" width="19.3" height="2.7" fill="#000"/><path d="M30.2 20.4 H32 M32.8 20.4 H33.6 M34.3 20.4 H34.8" stroke="#fff" stroke-width="0.8"/><path d="M21 28.2 C22.5 27.4 23.2 27.2 23.6 26.6 L24.2 24.2 C24.4 23.7 24.8 23.7 25.2 24 C25.8 24.4 26.6 24.4 27.2 24 C27.6 23.7 28 23.7 28.2 24.2 L28.8 26.6 C29.2 27.2 29.9 27.4 31.6 28.2 C29 29 23.6 29 21 28.2 Z" fill="#000"/><path d="M23.6 29.6 H28.8 C28.6 30.8 27.6 31.2 26.2 31.2 C24.8 31.2 23.8 30.8 23.6 29.6 Z" fill="#000"/><path d="M25.6 33.2 L28.8 34.6 L27.4 35 L28.6 36.6 L27.8 36.2 L26.6 35.4 L26 36.4 Z" fill="#000"/></svg>
<div class="ti">JS/Agent.DVU!tr</div>
<svg class="g" style="top:24px;width:16px;height:16px" viewBox="0 0 16 16"><circle cx="8" cy="8" r="7.6" fill="#808080"/><path d="M5.5 1.2 C4 2.5 3.6 4 4.6 5.2 C5.6 6 6.6 5.8 7 6.8 C7.2 7.8 6 8.2 6.4 9.4 C7 10.6 8.4 10.4 9 11.6 C9.2 12.6 8.6 13.6 9.2 14.6 C11 13.8 12 12.4 12.4 11 C12.8 9.8 11.6 9.2 10.8 8.6 C10 8 9 8.2 8.6 7.4 C8.4 6.4 9.6 6.2 10.4 5.4 C11 4.6 10.4 3.6 9.4 3.4 C8.4 3.2 7.8 2.4 8 1.4 C7 0.9 6.2 0.9 5.5 1.2 Z" fill="#fff"/><path d="M11.5 2.4 C12.6 3 13.6 4.2 14.2 5.4 C13.4 5.6 12.6 5.2 12.2 4.4 C11.8 3.6 11.4 3 11.5 2.4 Z" fill="#fff"/></svg>
<div class="ln" style="top:21.8px">eG81puF/zz3d/xft</div>
<svg class="g" style="top:44px;width:17px;height:19px" preserveAspectRatio="none" viewBox="0 0 17 18"><rect x="1" y="3" width="15" height="14" rx="1.2" fill="#fff" stroke="#808080" stroke-width="1.4"/><path d="M1 6.8 H16 M1 10.2 H16 M1 13.6 H16 M4.8 6.8 V17 M8.5 6.8 V17 M12.2 6.8 V17" stroke="#808080" stroke-width="1"/><rect x="4" y="0.6" width="2" height="4.4" rx="1" fill="#808080"/><rect x="11" y="0.6" width="2" height="4.4" rx="1" fill="#808080"/></svg>
<div class="ln" style="top:43.7px;left:121.8px">2020/05/30 11:13:42</div>
<svg class="g" style="top:68px;width:16px;height:16px" viewBox="0 0 16 16"><path d="M0.8 1.6 C0.8 1.1 1.1 0.8 1.6 0.8 H6.6 C7.2 0.8 7.8 1.1 8.2 1.5 L15 8.3 C15.4 8.7 15.4 9.3 15 9.7 L9.7 15 C9.3 15.4 8.7 15.4 8.3 15 L1.5 8.2 C1.1 7.8 0.8 7.2 0.8 6.6 Z" fill="#808080"/><circle cx="4.2" cy="4.2" r="1.4" fill="#fff"/></svg>
<div class="ln" style="top:65.8px">HTML, Redirector, Nemucod</div>
</div>
<div class="it" style="top:267px">
<svg class="tri" viewBox="0 0 52 47"><path d="M26 3.9 C27.7 3.9 29 4.9 29.8 6.3 L47.9 37.6 C49.5 40.6 47.8 43.9 44.3 43.9 L7.7 43.9 C4.2 43.9 2.5 40.6 4.1 37.6 L22.2 6.3 C23 4.9 24.3 3.9 26 3.9 Z" fill="none" stroke="#000" stroke-width="3.8" stroke-linejoin="round"/><path d="M19.5 30.3 A6.5 6.5 0 0 1 32.5 30.3 Z" fill="#000"/><circle cx="25.9" cy="28.4" r="2.3" fill="#fff"/><circle cx="25.9" cy="28.4" r="1.4" fill="#000"/><path d="M20.9 31.1 H31.1 A5.1 5.1 0 0 1 20.9 31.1 Z" fill="#000"/><g stroke="#000" fill="none" stroke-linecap="round"><path d="M22.2 35.2 L18.4 39.2 M29.8 35.2 L33.6 39.2" stroke-width="1.7"/><path d="M20.6 26.1 L16.3 22.1 M31.2 26.1 L35.5 22.1" stroke-width="1.6"/><path d="M14.2 28 C14.8 25.5 15.6 24 16.7 22.8 C18.3 21.2 20.3 20 23.1 19.2 M37.8 28.6 C37.2 25.8 36.3 24 35.1 22.8 C33.6 21.2 31.6 20 28.9 19.2" stroke-width="0.9"/></g></svg>
<div class="ti">HTML/CoinM.HEUR</div>
<svg class="g" style="top:24px;width:16px;height:16px" viewBox="0 0 16 16"><circle cx="8" cy="8" r="7.6" fill="#808080"/><path d="M5.5 1.2 C4 2.5 3.6 4 4.6 5.2 C5.6 6 6.6 5.8 7 6.8 C7.2 7.8 6 8.2 6.4 9.4 C7 10.6 8.4 10.4 9 11.6 C9.2 12.6 8.6 13.6 9.2 14.6 C11 13.8 12 12.4 12.4 11 C12.8 9.8 11.6 9.2 10.8 8.6 C10 8 9 8.2 8.6 7.4 C8.4 6.4 9.6 6.2 10.4 5.4 C11 4.6 10.4 3.6 9.4 3.4 C8.4 3.2 7.8 2.4 8 1.4 C7 0.9 6.2 0.9 5.5 1.2 Z" fill="#fff"/><path d="M11.5 2.4 C12.6 3 13.6 4.2 14.2 5.4 C13.4 5.6 12.6 5.2 12.2 4.4 C11.8 3.6 11.4 3 11.5 2.4 Z" fill="#fff"/></svg>
<div class="ln" style="top:21.8px">WvSBml8/ir6E/Vidcm6</div>
<svg class="g" style="top:44px;width:17px;height:19px" preserveAspectRatio="none" viewBox="0 0 17 18"><rect x="1" y="3" width="15" height="14" rx="1.2" fill="#fff" stroke="#808080" stroke-width="1.4"/><path d="M1 6.8 H16 M1 10.2 H16 M1 13.6 H16 M4.8 6.8 V17 M8.5 6.8 V17 M12.2 6.8 V17" stroke="#808080" stroke-width="1"/><rect x="4" y="0.6" width="2" height="4.4" rx="1" fill="#808080"/><rect x="11" y="0.6" width="2" height="4.4" rx="1" fill="#808080"/></svg>
<div class="ln" style="top:43.7px;left:121.8px">2020/05/30 11:13:44</div>
<svg class="g" style="top:68px;width:16px;height:16px" viewBox="0 0 16 16"><path d="M0.8 1.6 C0.8 1.1 1.1 0.8 1.6 0.8 H6.6 C7.2 0.8 7.8 1.1 8.2 1.5 L15 8.3 C15.4 8.7 15.4 9.3 15 9.7 L9.7 15 C9.3 15.4 8.7 15.4 8.3 15 L1.5 8.2 C1.1 7.8 0.8 7.2 0.8 6.6 Z" fill="#808080"/><circle cx="4.2" cy="4.2" r="1.4" fill="#fff"/></svg>
<div class="ln" style="top:65.8px">HTML, CoinMiner, FakejQuery</div>
</div>
<div class="it" style="top:356px">
<svg class="tri" viewBox="0 0 52 47"><path d="M26 3.9 C27.7 3.9 29 4.9 29.8 6.3 L47.9 37.6 C49.5 40.6 47.8 43.9 44.3 43.9 L7.7 43.9 C4.2 43.9 2.5 40.6 4.1 37.6 L22.2 6.3 C23 4.9 24.3 3.9 26 3.9 Z" fill="none" stroke="#000" stroke-width="3.8" stroke-linejoin="round"/><g stroke="#000" fill="none"><path d="M35.7 26.3 H38.2 V38.8 H22.8 V34.5" stroke-width="1.3"/><rect x="17.2" y="19.8" width="17.7" height="13.9" stroke-width="1.6" fill="#fff"/></g><rect x="16.4" y="19" width="19.3" height="2.7" fill="#000"/><path d="M30.2 20.4 H32 M32.8 20.4 H33.6 M34.3 20.4 H34.8" stroke="#fff" stroke-width="0.8"/><path d="M21 28.2 C22.5 27.4 23.2 27.2 23.6 26.6 L24.2 24.2 C24.4 23.7 24.8 23.7 25.2 24 C25.8 24.4 26.6 24.4 27.2 24 C27.6 23.7 28 23.7 28.2 24.2 L28.8 26.6 C29.2 27.2 29.9 27.4 31.6 28.2 C29 29 23.6 29 21 28.2 Z" fill="#000"/><path d="M23.6 29.6 H28.8 C28.6 30.8 27.6 31.2 26.2 31.2 C24.8 31.2 23.8 30.8 23.6 29.6 Z" fill="#000"/><path d="M25.6 33.2 L28.8 34.6 L27.4 35 L28.6 36.6 L27.8 36.2 L26.6 35.4 L26 36.4 Z" fill="#000"/></svg>
<div class="ti">JS/Agent.DVU!tr</div>
<svg class="g" style="top:24px;width:16px;height:16px" viewBox="0 0 16 16"><circle cx="8" cy="8" r="7.6" fill="#808080"/><path d="M5.5 1.2 C4 2.5 3.6 4 4.6 5.2 C5.6 6 6.6 5.8 7 6.8 C7.2 7.8 6 8.2 6.4 9.4 C7 10.6 8.4 10.4 9 11.6 C9.2 12.6 8.6 13.6 9.2 14.6 C11 13.8 12 12.4 12.4 11 C12.8 9.8 11.6 9.2 10.8 8.6 C10 8 9 8.2 8.6 7.4 C8.4 6.4 9.6 6.2 10.4 5.4 C11 4.6 10.4 3.6 9.4 3.4 C8.4 3.2 7.8 2.4 8 1.4 C7 0.9 6.2 0.9 5.5 1.2 Z" fill="#fff"/><path d="M11.5 2.4 C12.6 3 13.6 4.2 14.2 5.4 C13.4 5.6 12.6 5.2 12.2 4.4 C11.8 3.6 11.4 3 11.5 2.4 Z" fill="#fff"/></svg>
<div class="ln" style="top:21.8px">A48G/SpxgXS/plyR0</div>
<svg class="g" style="top:44px;width:17px;height:19px" preserveAspectRatio="none" viewBox="0 0 17 18"><rect x="1" y="3" width="15" height="14" rx="1.2" fill="#fff" stroke="#808080" stroke-width="1.4"/><path d="M1 6.8 H16 M1 10.2 H16 M1 13.6 H16 M4.8 6.8 V17 M8.5 6.8 V17 M12.2 6.8 V17" stroke="#808080" stroke-width="1"/><rect x="4" y="0.6" width="2" height="4.4" rx="1" fill="#808080"/><rect x="11" y="0.6" width="2" height="4.4" rx="1" fill="#808080"/></svg>
<div class="ln" style="top:43.7px;left:121.8px">2020/05/30 11:13:46</div>
<svg class="g" style="top:68px;width:16px;height:16px" viewBox="0 0 16 16"><path d="M0.8 1.6 C0.8 1.1 1.1 0.8 1.6 0.8 H6.6 C7.2 0.8 7.8 1.1 8.2 1.5 L15 8.3 C15.4 8.7 15.4 9.3 15 9.7 L9.7 15 C9.3 15.4 8.7 15.4 8.3 15 L1.5 8.2 C1.1 7.8 0.8 7.2 0.8 6.6 Z" fill="#808080"/><circle cx="4.2" cy="4.2" r="1.4" fill="#fff"/></svg>
<div class="ln" style="top:65.8px">HTML, Redirector</div>
</div>
<div class="it" style="top:445px">
<svg class="tri" viewBox="0 0 52 47"><path d="M26 3.9 C27.7 3.9 29 4.9 29.8 6.3 L47.9 37.6 C49.5 40.6 47.8 43.9 44.3 43.9 L7.7 43.9 C4.2 43.9 2.5 40.6 4.1 37.6 L22.2 6.3 C23 4.9 24.3 3.9 26 3.9 Z" fill="none" stroke="#000" stroke-width="3.8" stroke-linejoin="round"/><path d="M19.5 30.3 A6.5 6.5 0 0 1 32.5 30.3 Z" fill="#000"/><circle cx="25.9" cy="28.4" r="2.3" fill="#fff"/><circle cx="25.9" cy="28.4" r="1.4" fill="#000"/><path d="M20.9 31.1 H31.1 A5.1 5.1 0 0 1 20.9 31.1 Z" fill="#000"/><g stroke="#000" fill="none" stroke-linecap="round"><path d="M22.2 35.2 L18.4 39.2 M29.8 35.2 L33.6 39.2" stroke-width="1.7"/><path d="M20.6 26.1 L16.3 22.1 M31.2 26.1 L35.5 22.1" stroke-width="1.6"/><path d="M14.2 28 C14.8 25.5 15.6 24 16.7 22.8 C18.3 21.2 20.3 20 23.1 19.2 M37.8 28.6 C37.2 25.8 36.3 24 35.1 22.8 C33.6 21.2 31.6 20 28.9 19.2" stroke-width="0.9"/></g></svg>
<div class="ti">HTML/Crypted.Gen</div>
<svg class="g" style="top:24px;width:16px;height:16px" viewBox="0 0 16 16"><circle cx="8" cy="8" r="7.6" fill="#808080"/><path d="M5.5 1.2 C4 2.5 3.6 4 4.6 5.2 C5.6 6 6.6 5.8 7 6.8 C7.2 7.8 6 8.2 6.4 9.4 C7 10.6 8.4 10.4 9 11.6 C9.2 12.6 8.6 13.6 9.2 14.6 C11 13.8 12 12.4 12.4 11 C12.8 9.8 11.6 9.2 10.8 8.6 C10 8 9 8.2 8.6 7.4 C8.4 6.4 9.6 6.2 10.4 5.4 C11 4.6 10.4 3.6 9.4 3.4 C8.4 3.2 7.8 2.4 8 1.4 C7 0.9 6.2 0.9 5.5 1.2 Z" fill="#fff"/><path d="M11.5 2.4 C12.6 3 13.6 4.2 14.2 5.4 C13.4 5.6 12.6 5.2 12.2 4.4 C11.8 3.6 11.4 3 11.5 2.4 Z" fill="#fff"/></svg>
<div class="ln" style="top:21.8px">a/bQz/p5u</div>
<svg class="g" style="top:44px;width:17px;height:19px" preserveAspectRatio="none" viewBox="0 0 17 18"><rect x="1" y="3" width="15" height="14" rx="1.2" fill="#fff" stroke="#808080" stroke-width="1.4"/><path d="M1 6.8 H16 M1 10.2 H16 M1 13.6 H16 M4.8 6.8 V17 M8.5 6.8 V17 M12.2 6.8 V17" stroke="#808080" stroke-width="1"/><rect x="4" y="0.6" width="2" height="4.4" rx="1" fill="#808080"/><rect x="11" y="0.6" width="2" height="4.4" rx="1" fill="#808080"/></svg>
<div class="ln" style="top:43.7px;left:121.8px">2020/05/30 11:13:49</div>
<svg class="g" style="top:68px;width:16px;height:16px" viewBox="0 0 16 16"><path d="M0.8 1.6 C0.8 1.1 1.1 0.8 1.6 0.8 H6.6 C7.2 0.8 7.8 1.1 8.2 1.5 L15 8.3 C15.4 8.7 15.4 9.3 15 9.7 L9.7 15 C9.3 15.4 8.7 15.4 8.3 15 L1.5 8.2 C1.1 7.8 0.8 7.2 0.8 6.6 Z" fill="#808080"/><circle cx="4.2" cy="4.2" r="1.4" fill="#fff"/></svg>
<div class="ln" style="top:65.8px">HTML, CoinMiner</div>
</div>
<div class="it" style="top:534px">
<svg class="tri" viewBox="0 0 52 47"><path d="M26 3.9 C27.7 3.9 29 4.9 29.8 6.3 L47.9 37.6 C49.5 40.6 47.8 43.9 44.3 43.9 L7.7 43.9 C4.2 43.9 2.5 40.6 4.1 37.6 L22.2 6.3 C23 4.9 24.3 3.9 26 3.9 Z" fill="none" stroke="#000" stroke-width="3.8" stroke-linejoin="round"/><g stroke="#000" fill="none"><path d="M35.7 26.3 H38.2 V38.8 H22.8 V34.5" stroke-width="1.3"/><rect x="17.2" y="19.8" width="17.7" height="13.9" stroke-width="1.6" fill="#fff"/></g><rect x="16.4" y="19" width="19.3" height="2.7" fill="#000"/><path d="M30.2 20.4 H32 M32.8 20.4 H33.6 M34.3 20.4 H34.8" stroke="#fff" stroke-width="0.8"/><path d="M21 28.2 C22.5 27.4 23.2 27.2 23.6 26.6 L24.2 24.2 C24.4 23.7 24.8 23.7 25.2 24 C25.8 24.4 26.6 24.4 27.2 24 C27.6 23.7 28 23.7 28.2 24.2 L28.8 26.6 C29.2 27.2 29.9 27.4 31.6 28.2 C29 29 23.6 29 21 28.2 Z" fill="#000"/><path d="M23.6 29.6 H28.8 C28.6 30.8 27.6 31.2 26.2 31.2 C24.8 31.2 23.8 30.8 23.6 29.6 Z" fill="#000"/><path d="M25.6 33.2 L28.8 34.6 L27.4 35 L28.6 36.6 L27.8 36.2 L26.6 35.4 L26 36.4 Z" fill="#000"/></svg>
<div class="ti">JS/Agent.NOI</div>
<svg class="g" style="top:24px;width:16px;height:16px" viewBox="0 0 16 16"><circle cx="8" cy="8" r="7.6" fill="#808080"/><path d="M5.5 1.2 C4 2.5 3.6 4 4.6 5.2 C5.6 6 6.6 5.8 7 6.8 C7.2 7.8 6 8.2 6.4 9.4 C7 10.6 8.4 10.4 9 11.6 C9.2 12.6 8.6 13.6 9.2 14.6 C11 13.8 12 12.4 12.4 11 C12.8 9.8 11.6 9.2 10.8 8.6 C10 8 9 8.2 8.6 7.4 C8.4 6.4 9.6 6.2 10.4 5.4 C11 4.6 10.4 3.6 9.4 3.4 C8.4 3.2 7.8 2.4 8 1.4 C7 0.9 6.2 0.9 5.5 1.2 Z" fill="#fff"/><path d="M11.5 2.4 C12.6 3 13.6 4.2 14.2 5.4 C13.4 5.6 12.6 5.2 12.2 4.4 C11.8 3.6 11.4 3 11.5 2.4 Z" fill="#fff"/></svg>
<div class="ln" style="top:21.8px">TD/T3Q/pgXc</div>
<svg class="g" style="top:44px;width:17px;height:19px" preserveAspectRatio="none" viewBox="0 0 17 18"><rect x="1" y="3" width="15" height="14" rx="1.2" fill="#fff" stroke="#808080" stroke-width="1.4"/><path d="M1 6.8 H16 M1 10.2 H16 M1 13.6 H16 M4.8 6.8 V17 M8.5 6.8 V17 M12.2 6.8 V17" stroke="#808080" stroke-width="1"/><rect x="4" y="0.6" width="2" height="4.4" rx="1" fill="#808080"/><rect x="11" y="0.6" width="2" height="4.4" rx="1" fill="#808080"/></svg>
<div class="ln" style="top:43.7px;left:121.8px">2020/05/30 11:13:50</div>
<svg class="g" style="top:68px;width:16px;height:16px" viewBox="0 0 16 16"><path d="M0.8 1.6 C0.8 1.1 1.1 0.8 1.6 0.8 H6.6 C7.2 0.8 7.8 1.1 8.2 1.5 L15 8.3 C15.4 8.7 15.4 9.3 15 9.7 L9.7 15 C9.3 15.4 8.7 15.4 8.3 15 L1.5 8.2 C1.1 7.8 0.8 7.2 0.8 6.6 Z" fill="#808080"/><circle cx="4.2" cy="4.2" r="1.4" fill="#fff"/></svg>
<div class="ln" style="top:65.8px">HTML, Redirector, FakejQuery</div>
</div>
<div class="it" style="top:623px">
<svg class="tri" viewBox="0 0 52 47"><path d="M26 3.9 C27.7 3.9 29 4.9 29.8 6.3 L47.9 37.6 C49.5 40.6 47.8 43.9 44.3 43.9 L7.7 43.9 C4.2 43.9 2.5 40.6 4.1 37.6 L22.2 6.3 C23 4.9 24.3 3.9 26 3.9 Z" fill="none" stroke="#000" stroke-width="3.8" stroke-linejoin="round"/><path d="M19.5 30.3 A6.5 6.5 0 0 1 32.5 30.3 Z" fill="#000"/><circle cx="25.9" cy="28.4" r="2.3" fill="#fff"/><circle cx="25.9" cy="28.4" r="1.4" fill="#000"/><path d="M20.9 31.1 H31.1 A5.1 5.1 0 0 1 20.9 31.1 Z" fill="#000"/><g stroke="#000" fill="none" stroke-linecap="round"><path d="M22.2 35.2 L18.4 39.2 M29.8 35.2 L33.6 39.2" stroke-width="1.7"/><path d="M20.6 26.1 L16.3 22.1 M31.2 26.1 L35.5 22.1" stroke-width="1.6"/><path d="M14.2 28 C14.8 25.5 15.6 24 16.7 22.8 C18.3 21.2 20.3 20 23.1 19.2 M37.8 28.6 C37.2 25.8 36.3 24 35.1 22.8 C33.6 21.2 31.6 20 28.9 19.2" stroke-width="0.9"/></g></svg>
<div class="ti">HTML/Crypted.Gen</div>
<svg class="g" style="top:24px;width:16px;height:16px" viewBox="0 0 16 16"><circle cx="8" cy="8" r="7.6" fill="#808080"/><path d="M5.5 1.2 C4 2.5 3.6 4 4.6 5.2 C5.6 6 6.6 5.8 7 6.8 C7.2 7.8 6 8.2 6.4 9.4 C7 10.6 8.4 10.4 9 11.6 C9.2 12.6 8.6 13.6 9.2 14.6 C11 13.8 12 12.4 12.4 11 C12.8 9.8 11.6 9.2 10.8 8.6 C10 8 9 8.2 8.6 7.4 C8.4 6.4 9.6 6.2 10.4 5.4 C11 4.6 10.4 3.6 9.4 3.4 C8.4 3.2 7.8 2.4 8 1.4 C7 0.9 6.2 0.9 5.5 1.2 Z" fill="#fff"/><path d="M11.5 2.4 C12.6 3 13.6 4.2 14.2 5.4 C13.4 5.6 12.6 5.2 12.2 4.4 C11.8 3.6 11.4 3 11.5 2.4 Z" fill="#fff"/></svg>
<div class="ln" style="top:21.8px">Xw9/kLm2/aQ</div>
<svg class="g" style="top:44px;width:17px;height:19px" preserveAspectRatio="none" viewBox="0 0 17 18"><rect x="1" y="3" width="15" height="14" rx="1.2" fill="#fff" stroke="#808080" stroke-width="1.4"/><path d="M1 6.8 H16 M1 10.2 H16 M1 13.6 H16 M4.8 6.8 V17 M8.5 6.8 V17 M12.2 6.8 V17" stroke="#808080" stroke-width="1"/><rect x="4" y="0.6" width="2" height="4.4" rx="1" fill="#808080"/><rect x="11" y="0.6" width="2" height="4.4" rx="1" fill="#808080"/></svg>
<div class="ln" style="top:43.7px;left:121.8px">2020/05/30 11:13:52</div>
<svg class="g" style="top:68px;width:16px;height:16px" viewBox="0 0 16 16"><path d="M0.8 1.6 C0.8 1.1 1.1 0.8 1.6 0.8 H6.6 C7.2 0.8 7.8 1.1 8.2 1.5 L15 8.3 C15.4 8.7 15.4 9.3 15 9.7 L9.7 15 C9.3 15.4 8.7 15.4 8.3 15 L1.5 8.2 C1.1 7.8 0.8 7.2 0.8 6.6 Z" fill="#808080"/><circle cx="4.2" cy="4.2" r="1.4" fill="#fff"/></svg>
<div class="ln" style="top:65.8px">HTML, CoinMiner</div>
</div>
</div>
<div class="abs" style="left:587px;top:738px;width:940px;height:1px;background:#f1f1f1"></div>
<div class="abs" style="left:1508px;top:87px;width:17px;height:647px;background:#f1f1f1"></div>
<svg class="abs" style="left:1512px;top:93.5px;width:9px;height:5px" viewBox="0 0 9 6"><path d="M0.5 5.5 L4.5 0.8 L8.5 5.5 Z" fill="#a3a3a3"/></svg>
<div class="abs" style="left:1510px;top:105px;width:13px;height:47px;background:#c1c1c1"></div>
<div class="hd" style="left:258px;top:759px;width:1650px"><svg style="display:inline-block;vertical-align:top;margin:1px 4px 0 0;width:16px;height:16px;visibility:hidden" viewBox="0 0 16 16"><rect width="16" height="16" fill="#7b8fa1"/><path d="M3 3 H13 L9.3 7.5 V12 H6.7 V7.5 Z" fill="#fff"/></svg>Date</div>
<svg class="abs" style="left:1897.5px;top:763px;width:8px;height:11px" viewBox="0 0 9 13" preserveAspectRatio="none"><path d="M4.5 0.5 L8.5 5.5 H0.5 Z M4.5 12.5 L8.5 7.5 H0.5 Z" fill="#222"/></svg>
<svg class="abs" style="left:258px;top:783px;width:1651px;height:195px" viewBox="258 783 1651 195" font-family="Liberation Sans, sans-serif"><line x1="290" x2="1878" y1="788.60" y2="788.60" stroke="#b4b4b4" stroke-width="1" stroke-dasharray="1 1"/><line x1="287" x2="289.500" y1="788.60" y2="788.60" stroke="#777" stroke-width="1"/><line x1="1878.500" x2="1881" y1="788.60" y2="788.60" stroke="#777" stroke-width="1"/><text x="284.500" y="791.70" font-size="8.3" fill="#686868" text-anchor="end">2.8k</text><text x="1883.500" y="791.70" font-size="8.3" fill="#686868">2.8k</text><line x1="290" x2="1878" y1="799.48" y2="799.48" stroke="#b4b4b4" stroke-width="1" stroke-dasharray="1 1"/><line x1="287" x2="289.500" y1="799.48" y2="799.48" stroke="#777" stroke-width="1"/><line x1="1878.500" x2="1881" y1="799.48" y2="799.48" stroke="#777" stroke-width="1"/><text x="284.500" y="802.58" font-size="8.3" fill="#686868" text-anchor="end">2.6k</text><text x="1883.500" y="802.58" font-size="8.3" fill="#686868">2.6k</text><line x1="290" x2="1878" y1="810.36" y2="810.36" stroke="#b4b4b4" stroke-width="1" stroke-dasharray="1 1"/><line x1="287" x2="289.500" y1="810.36" y2="810.36" stroke="#777" stroke-width="1"/><line x1="1878.500" x2="1881" y1="810.36" y2="810.36" stroke="#777" stroke-width="1"/><text x="284.500" y="813.46" font-size="8.3" fill="#686868" text-anchor="end">2.4k</text><text x="1883.500" y="813.46" font-size="8.3" fill="#686868">2.4k</text><line x1="290" x2="1878" y1="821.24" y2="821.24" stroke="#b4b4b4" stroke-width="1" stroke-dasharray="1 1"/><line x1="287" x2="289.500" y1="821.24" y2="821.24" stroke="#777" stroke-width="1"/><line x1="1878.500" x2="1881" y1="821.24" y2="821.24" stroke="#777" stroke-width="1"/><text x="284.500" y="824.34" font-size="8.3" fill="#686868" text-anchor="end">2.2k</text><text x="1883.500" y="824.34" font-size="8.3" fill="#686868">2.2k</text><line x1="290" x2="1878" y1="832.12" y2="832.12" stroke="#b4b4b4" stroke-width="1" stroke-dasharray="1 1"/><line x1="287" x2="289.500" y1="832.12" y2="832.12" stroke="#777" stroke-width="1"/><line x1="1878.500" x2="1881" y1="832.12" y2="832.12" stroke="#777" stroke-width="1"/><text x="284.500" y="835.22" font-size="8.3" fill="#686868" text-anchor="end">2.0k</text><text x="1883.500" y="835.22" font-size="8.3" fill="#686868">2.0k</text><line x1="290" x2="1878" y1="843.00" y2="843.00" stroke="#b4b4b4" stroke-width="1" stroke-dasharray="1 1"/><line x1="287" x2="289.500" y1="843.00" y2="843.00" stroke="#777" stroke-width="1"/><line x1="1878.500" x2="1881" y1="843.00" y2="843.00" stroke="#777" stroke-width="1"/><text x="284.500" y="846.10" font-size="8.3" fill="#686868" text-anchor="end">1.8k</text><text x="1883.500" y="846.10" font-size="8.3" fill="#686868">1.8k</text><line x1="290" x2="1878" y1="853.88" y2="853.88" stroke="#b4b4b4" stroke-width="1" stroke-dasharray="1 1"/><line x1="287" x2="289.500" y1="853.88" y2="853.88" stroke="#777" stroke-width="1"/><line x1="1878.500" x2="1881" y1="853.88" y2="853.88" stroke="#777" stroke-width="1"/><text x="284.500" y="856.98" font-size="8.3" fill="#686868" text-anchor="end">1.6k</text><text x="1883.500" y="856.98" font-size="8.3" fill="#686868">1.6k</text><line x1="290" x2="1878" y1="864.76" y2="864.76" stroke="#b4b4b4" stroke-width="1" stroke-dasharray="1 1"/><line x1="287" x2="289.500" y1="864.76" y2="864.76" stroke="#777" stroke-width="1"/><line x1="1878.500" x2="1881" y1="864.76" y2="864.76" stroke="#777" stroke-width="1"/><text x="284.500" y="867.86" font-size="8.3" fill="#686868" text-anchor="end">1.4k</text><text x="1883.500" y="867.86" font-size="8.3" fill="#686868">1.4k</text><line x1="290" x2="1878" y1="875.64" y2="875.64" stroke="#b4b4b4" stroke-width="1" stroke-dasharray="1 1"/><line x1="287" x2="289.500" y1="875.64" y2="875.64" stroke="#777" stroke-width="1"/><line x1="1878.500" x2="1881" y1="875.64" y2="875.64" stroke="#777" stroke-width="1"/><text x="284.500" y="878.74" font-size="8.3" fill="#686868" text-anchor="end">1.2k</text><text x="1883.500" y="878.74" font-size="8.3" fill="#686868">1.2k</text><line x1="290" x2="1878" y1="886.52" y2="886.52" stroke="#b4b4b4" stroke-width="1" stroke-dasharray="1 1"/><line x1="287" x2="289.500" y1="886.52" y2="886.52" stroke="#777" stroke-width="1"/><line x1="1878.500" x2="1881" y1="886.52" y2="886.52" stroke="#777" stroke-width="1"/><text x="284.500" y="889.62" font-size="8.3" fill="#686868" text-anchor="end">1.0k</text><text x="1883.500" y="889.62" font-size="8.3" fill="#686868">1.0k</text><line x1="290" x2="1878" y1="897.40" y2="897.40" stroke="#b4b4b4" stroke-width="1" stroke-dasharray="1 1"/><line x1="287" x2="289.500" y1="897.40" y2="897.40" stroke="#777" stroke-width="1"/><line x1="1878.500" x2="1881" y1="897.40" y2="897.40" stroke="#777" stroke-width="1"/><text x="284.500" y="900.50" font-size="8.3" fill="#686868" text-anchor="end">800</text><text x="1883.500" y="900.50" font-size="8.3" fill="#686868">800</text><line x1="290" x2="1878" y1="908.28" y2="908.28" stroke="#b4b4b4" stroke-width="1" stroke-dasharray="1 1"/><line x1="287" x2="289.500" y1="908.28" y2="908.28" stroke="#777" stroke-width="1"/><line x1="1878.500" x2="1881" y1="908.28" y2="908.28" stroke="#777" stroke-width="1"/><text x="284.500" y="911.38" font-size="8.3" fill="#686868" text-anchor="end">600</text><text x="1883.500" y="911.38" font-size="8.3" fill="#686868">600</text><line x1="290" x2="1878" y1="919.16" y2="919.16" stroke="#b4b4b4" stroke-width="1" stroke-dasharray="1 1"/><line x1="287" x2="289.500" y1="919.16" y2="919.16" stroke="#777" stroke-width="1"/><line x1="1878.500" x2="1881" y1="919.16" y2="919.16" stroke="#777" stroke-width="1"/><text x="284.500" y="922.26" font-size="8.3" fill="#686868" text-anchor="end">400</text><text x="1883.500" y="922.26" font-size="8.3" fill="#686868">400</text><line x1="290" x2="1878" y1="930.04" y2="930.04" stroke="#b4b4b4" stroke-width="1" stroke-dasharray="1 1"/><line x1="287" x2="289.500" y1="930.04" y2="930.04" stroke="#777" stroke-width="1"/><line x1="1878.500" x2="1881" y1="930.04" y2="930.04" stroke="#777" stroke-width="1"/><text x="284.500" y="933.14" font-size="8.3" fill="#686868" text-anchor="end">200</text><text x="1883.500" y="933.14" font-size="8.3" fill="#686868">200</text><path d="M402.5 939.4 C478.2 939.4 553.8 939.4 629.5 939.4 C705.5 939.4 781.5 939.4 857.5 939.4 C933.5 939.4 1009.5 927.2 1085.5 902.7 C1161.2 878.3 1236.8 788.1 1312.5 788.1 C1388.5 788.1 1464.5 939.4 1540.5 939.4 C1616.5 939.4 1692.5 930.5 1768.5 921.6  L1768.5 940.0 L402.5 940.0 Z" fill="rgba(138,150,168,0.4)"/><path d="M402.5 939.4 C478.2 939.4 553.8 939.4 629.5 939.4 C705.5 939.4 781.5 939.4 857.5 939.4 C933.5 939.4 1009.5 927.2 1085.5 902.7 C1161.2 878.3 1236.8 788.1 1312.5 788.1 C1388.5 788.1 1464.5 939.4 1540.5 939.4 C1616.5 939.4 1692.5 930.5 1768.5 921.6 " fill="none" stroke="#aab3bd" stroke-width="1"/><circle cx="402.5" cy="939.4" r="2.1" fill="#9aa5b1"/><circle cx="629.5" cy="939.4" r="2.1" fill="#9aa5b1"/><circle cx="857.5" cy="939.4" r="2.1" fill="#9aa5b1"/><line x1="1085.5" x2="1085.5" y1="902.7" y2="939.4" stroke="#aab3bd" stroke-width="1"/><circle cx="1085.5" cy="902.7" r="2.1" fill="#9aa5b1"/><line x1="1312.5" x2="1312.5" y1="788.1" y2="939.4" stroke="#aab3bd" stroke-width="1"/><circle cx="1312.5" cy="788.1" r="2.1" fill="#9aa5b1"/><circle cx="1540.5" cy="939.4" r="2.1" fill="#9aa5b1"/><line x1="1768.5" x2="1768.5" y1="921.6" y2="939.4" stroke="#aab3bd" stroke-width="1"/><circle cx="1768.5" cy="921.6" r="2.1" fill="#9aa5b1"/><line x1="285" x2="1882" y1="956.2" y2="956.2" stroke="#cfcfcf" stroke-width="2.6"/><line x1="401.5" x2="401.5" y1="951.7" y2="960.5" stroke="#333" stroke-width="1"/><text x="401.5" y="950.5" font-size="9.6" fill="#888" text-anchor="middle">0</text><text x="401.0" y="972" font-size="9.9" fill="#333" text-anchor="middle">2020/5/26 17:00</text><line x1="628.5" x2="628.5" y1="951.7" y2="960.5" stroke="#333" stroke-width="1"/><text x="628.5" y="950.5" font-size="9.6" fill="#888" text-anchor="middle">0</text><text x="628.0" y="972" font-size="9.9" fill="#333" text-anchor="middle">2020/5/27 17:00</text><line x1="856.5" x2="856.5" y1="951.7" y2="960.5" stroke="#333" stroke-width="1"/><text x="856.5" y="950.5" font-size="9.6" fill="#888" text-anchor="middle">0</text><text x="856.0" y="972" font-size="9.9" fill="#333" text-anchor="middle">2020/5/28 17:00</text><line x1="1084.5" x2="1084.5" y1="951.7" y2="960.5" stroke="#333" stroke-width="1"/><text x="1084.5" y="950.5" font-size="9.6" fill="#888" text-anchor="middle">679</text><text x="1084.0" y="972" font-size="9.9" fill="#333" text-anchor="middle">2020/5/29 17:00</text><line x1="1311.5" x2="1311.5" y1="951.7" y2="960.5" stroke="#333" stroke-width="1"/><text x="1311.5" y="950.5" font-size="9.6" fill="#888" text-anchor="middle">2.8k</text><text x="1311.0" y="972" font-size="9.9" fill="#333" text-anchor="middle">2020/5/30 17:00</text><line x1="1539.5" x2="1539.5" y1="951.7" y2="960.5" stroke="#333" stroke-width="1"/><text x="1539.5" y="950.5" font-size="9.6" fill="#888" text-anchor="middle">0</text><text x="1539.0" y="972" font-size="9.9" fill="#333" text-anchor="middle">2020/5/31 17:00</text><line x1="1767.5" x2="1767.5" y1="951.7" y2="960.5" stroke="#333" stroke-width="1"/><text x="1767.5" y="950.5" font-size="9.6" fill="#888" text-anchor="middle">329</text><text x="1767.0" y="972" font-size="9.9" fill="#333" text-anchor="middle">2020/6/1 17:00</text><text x="281" y="950" font-size="9" font-weight="bold" fill="#111" text-anchor="middle">#</text><path d="M287.5 953.5 V960.5 H285 A3.4 3.5 0 0 1 285 953.5 Z" fill="#fff" stroke="#222" stroke-width="1"/><path d="M1840.500 953.5 V960.5 H1843 A3.4 3.5 0 0 0 1843 953.5 Z" fill="#fff" stroke="#222" stroke-width="1"/></svg>
</body></html>
